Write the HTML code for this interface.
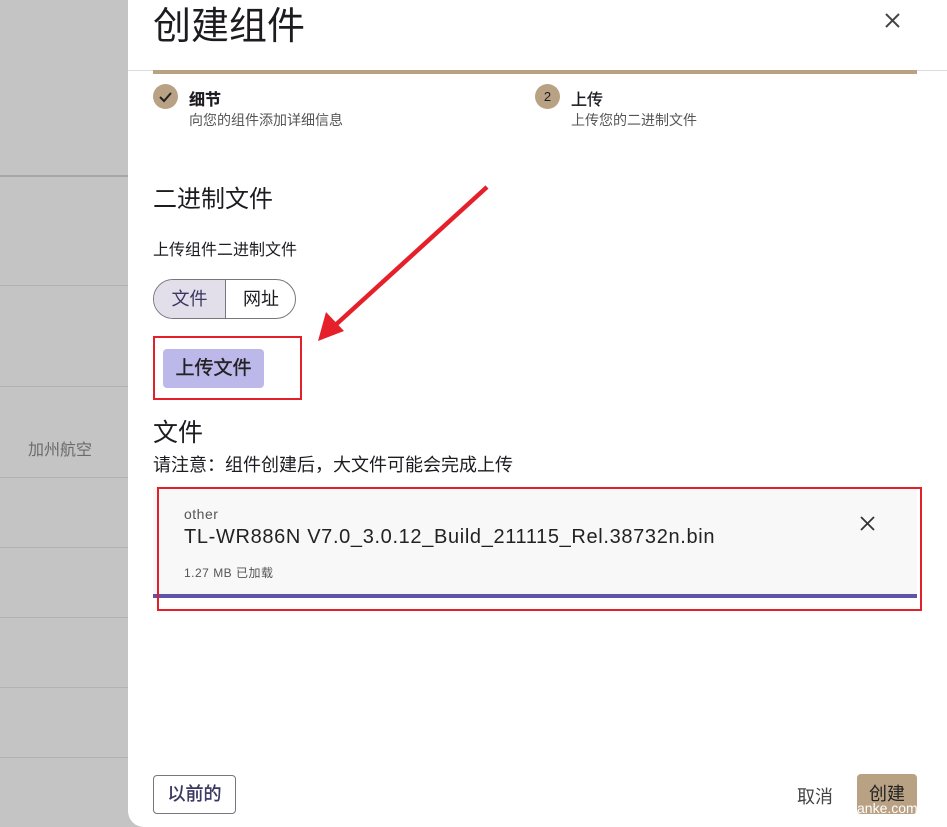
<!DOCTYPE html>
<html><head><meta charset="utf-8"><style>
*{margin:0;padding:0;box-sizing:border-box}
body{width:947px;height:827px;overflow:hidden;background:#c4c4c4;position:relative;font-family:"Liberation Sans","Noto Sans CJK SC",sans-serif;color:#1d1b20}
.a{position:absolute}
.hl{position:absolute;left:0;width:128px;height:1px;background:#b2b2b2}
.modal{position:absolute;left:128px;top:0;width:819px;height:827px;background:#fff;border-bottom-left-radius:16px}
</style></head><body>
<div class="hl" style="top:175px;height:2px;background:#a6a6a6"></div>
<div class="hl" style="top:285px"></div>
<div class="hl" style="top:386px"></div>
<div class="hl" style="top:477px"></div>
<div class="hl" style="top:547px"></div>
<div class="hl" style="top:617px"></div>
<div class="hl" style="top:687px"></div>
<div class="hl" style="top:757px"></div>
<div class="a" style="left:28px;top:436px;font-size:16px;color:#6b6b6b">加州航空</div>
<div class="modal"></div>
<div class="a" style="left:153px;top:-5px;font-size:38px;color:#1d1b20">创建组件</div>
<svg class="a" style="left:884px;top:12px" width="17" height="17"><path d="M2 2L15 15M15 2L2 15" stroke="#444" stroke-width="2"/></svg>
<div class="a" style="left:128px;top:70px;width:819px;height:1px;background:#ddd"></div>
<div class="a" style="left:153px;top:70px;width:764px;height:4px;background:#b9a184"></div>
<div class="a" style="left:153px;top:84px;width:25px;height:25px;border-radius:50%;background:#b9a184"></div>
<svg class="a" style="left:158px;top:89px" width="15" height="15"><path d="M2 8L6 12L13 4" fill="none" stroke="#222" stroke-width="2"/></svg>
<div class="a" style="left:189px;top:86px;font-size:16px;font-weight:600;-webkit-text-stroke:0.2px #1d1b20">细节</div>
<div class="a" style="left:189px;top:110px;font-size:14px;color:#555">向您的组件添加详细信息</div>
<div class="a" style="left:535px;top:84px;width:25px;height:25px;border-radius:50%;background:#b9a184;font-size:13px;text-align:center;line-height:25px">2</div>
<div class="a" style="left:571px;top:86px;font-size:16px;-webkit-text-stroke:0.3px #1d1b20">上传</div>
<div class="a" style="left:571px;top:110px;font-size:14px;color:#555">上传您的二进制文件</div>
<div class="a" style="left:153px;top:179px;font-size:24px">二进制文件</div>
<div class="a" style="left:153px;top:236px;font-size:16px">上传组件二进制文件</div>
<div class="a" style="left:153px;top:279px;width:143px;height:40px;border:1px solid #79747e;border-radius:20px;overflow:hidden;font-size:18px">
<div class="a" style="left:0;top:0;width:72px;height:38px;background:#e2dfea;border-right:1px solid #79747e;text-align:center;line-height:38px;color:#3b3760">文件</div>
<div class="a" style="left:72px;top:0;width:70px;height:38px;text-align:center;line-height:38px">网址</div></div>
<div class="a" style="left:153px;top:336px;width:149px;height:64px;border:2px solid #e3202a"></div>
<div class="a" style="left:163px;top:349px;width:101px;height:39px;background:#bdb8ea;border-radius:4px;font-size:19px;text-align:center;line-height:39px;color:#222;-webkit-text-stroke:0.4px #222">上传文件</div>
<svg class="a" style="left:300px;top:180px" width="200" height="175"><path d="M187 7L30 150" stroke="#e5202a" stroke-width="4.5"/><path d="M18 161L26 132L44 151Z" fill="#e5202a"/></svg>
<div class="a" style="left:153px;top:413px;font-size:25px">文件</div>
<div class="a" style="left:153px;top:451px;font-size:18px">请注意：组件创建后，大文件可能会完成上传</div>
<div class="a" style="left:153px;top:487px;width:764px;height:110px;background:#f8f8f8"></div>
<div class="a" style="left:153px;top:594px;width:764px;height:4px;background:#5d55a8"></div>
<div class="a" style="left:157px;top:487px;width:765px;height:124px;border:2px solid #e3202a"></div>
<div class="a" style="left:184px;top:506px;font-size:14px;color:#555;letter-spacing:.5px">other</div>
<div class="a" style="left:184px;top:526px;font-size:20px;color:#222;letter-spacing:0.65px">TL-WR886N V7.0_3.0.12_Build_211115_Rel.38732n.bin</div>
<div class="a" style="left:184px;top:564px;font-size:12px;color:#555;letter-spacing:.5px">1.27 MB 已加载</div>
<svg class="a" style="left:860px;top:516px" width="15" height="15"><path d="M1 1L14 14M14 1L1 14" stroke="#333" stroke-width="1.8"/></svg>
<div class="a" style="left:153px;top:775px;width:83px;height:39px;border:1px solid #79747e;border-radius:4px;font-size:18px;text-align:center;line-height:37px;color:#3b3760;-webkit-text-stroke:0.4px #3b3760">以前的</div>
<div class="a" style="left:797px;top:783px;font-size:18px;color:#444">取消</div>
<div class="a" style="left:857px;top:774px;width:60px;height:40px;background:#b9a184;border-radius:4px;font-size:18px;text-align:center;line-height:40px;color:#222">创建</div>
<div class="a" style="left:857px;top:800px;font-size:14px;color:#fff">anke.com</div>
</body></html>
